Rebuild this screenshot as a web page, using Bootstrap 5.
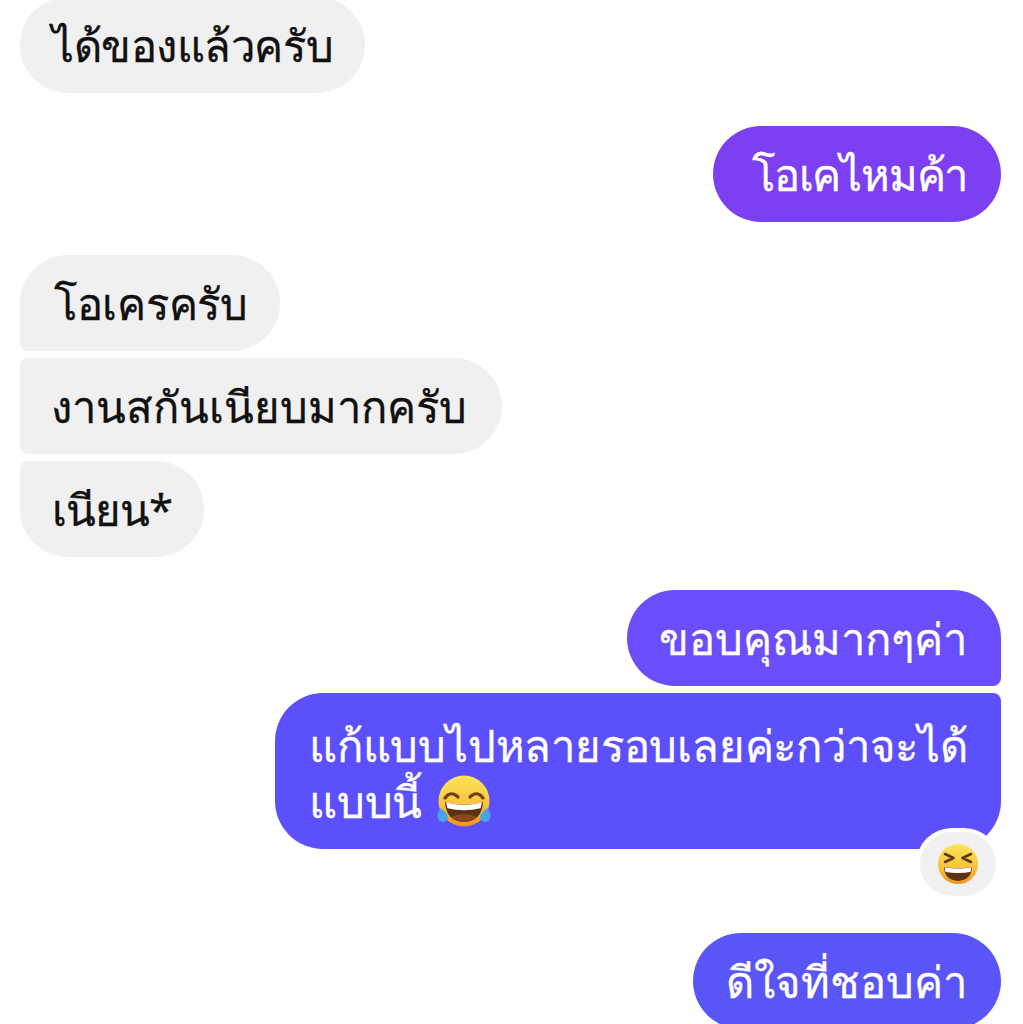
<!DOCTYPE html>
<html lang="th">
<head>
  <meta charset="UTF-8">
  <meta name="viewport" content="width=device-width, initial-scale=1.0">
  <title>Chat</title>
  <link href="https://cdn.jsdelivr.net/npm/bootstrap@5.3.0/dist/css/bootstrap.min.css" rel="stylesheet">
  <style>
    html, body { height: 1024px; overflow: hidden; background: #fff; }
    body { font-family: "Noto Sans", "Liberation Sans", "DejaVu Sans", sans-serif; }
    .chat-wrap { margin-top: -3px; padding: 0 22px 0 20px; }
    .bubble { height: 96px; font-size: 43.6px; line-height: 52px; padding: 22px 34px; border-radius: 48px; white-space: nowrap; -webkit-text-stroke: 0.3px currentColor; }
    .them { background: #f0f0f0; color: #111; }
    .me { color: #fff; }
    .group-gap { margin-top: 33px; }
    .after-react { margin-top: 84px; }
    .stack { gap: 7px; }
    .c-purple { background: #7c3ff2; }
    .c-indigo { background: #6a4dfb; }
    .c-blue { background: #5b50fb; }
    .c-last { background: #5a55f6; }
    .them.top { border-bottom-left-radius: 8px; }
    .them.mid { border-top-left-radius: 8px; border-bottom-left-radius: 8px; }
    .them.end { border-top-left-radius: 8px; }
    .me.top { border-bottom-right-radius: 8px; }
    .me.end { border-top-right-radius: 8px; }
    .msg-got { width: 345px; padding-left: 32px; letter-spacing: -0.45px; }
    .msg-ok { width: 288px; letter-spacing: -1.2px; padding-left: 39px; }
    .msg-okay { width: 260px; letter-spacing: -0.3px; }
    .msg-neat { width: 482px; padding-left: 31px; }
    .msg-typo { width: 184px; letter-spacing: -1px; padding-left: 32px; }
    .msg-thanks { width: 374px; padding-left: 32px; }
    .msg-glad { width: 308px; padding-left: 33px; }
    .bubble.tall { height: 156px; width: 726px; padding: 24px 34px; line-height: 56px; letter-spacing: -0.2px; }
    .tear-emoji { vertical-align: -12px; margin-left: 3px; }
    .react { position: absolute; right: 5px; bottom: -47px; width: 76px; height: 64px; border-radius: 32px; background: #f1f1f1; box-shadow: 0 0 0 4px #fff; }
  </style>
</head>
<body>
  <div class="chat-wrap d-flex flex-column">
    <div class="d-flex"><div class="bubble them msg-got">ได้ของแล้วครับ</div></div>

    <div class="d-flex justify-content-end group-gap"><div class="bubble me c-purple msg-ok">โอเคไหมค้า</div></div>

    <div class="d-flex flex-column align-items-start stack group-gap">
      <div class="bubble them top msg-okay">โอเครครับ</div>
      <div class="bubble them mid msg-neat">งานสกันเนียบมากครับ</div>
      <div class="bubble them end msg-typo">เนียน*</div>
    </div>

    <div class="d-flex flex-column align-items-end stack group-gap">
      <div class="bubble me top c-indigo msg-thanks">ขอบคุณมากๆค่า</div>
      <div class="bubble me end tall c-blue position-relative">
        แก้แบบไปหลายรอบเลยค่ะกว่าจะได้<br>แบบนี้
        <svg width="56" height="56" viewBox="0 0 56 56" class="tear-emoji">
          <defs><linearGradient id="f1" x1="0" y1="0" x2="0" y2="1"><stop offset="0" stop-color="#fde45c"/><stop offset="0.6" stop-color="#f9c23a"/><stop offset="1" stop-color="#ef931c"/></linearGradient></defs>
          <circle cx="28" cy="27" r="25.500" fill="url(#f1)"/>
          <path d="M9 24q6-8 13-1M34 23q7-7 13 1" fill="none" stroke="#6b4316" stroke-width="3.200" stroke-linecap="round"/>
          <path d="M9 28q19 6 38 0q-1 19-19 20q-18-1-19-20z" fill="#5c3014"/>
          <path d="M10 28.300q18 5.700 36 0l-1.500 6q-16.500 4-33 0z" fill="#fff"/>
          <path d="M15 43q13-6 26 0q-6 5-13 5t-13-5z" fill="#8a4a1c"/>
          <path d="M5 34q-4 5-3.500 9q1 5 5.500 5q5-1 5-5q0-3-7-9z" fill="#4aa3e6"/>
          <path d="M51 34q4 5 3.500 9q-1 5-5.500 5q-5-1-5-5q0-3 7-9z" fill="#4aa3e6"/>
        </svg>
        <div class="react d-flex align-items-center justify-content-center">
          <svg width="44" height="44" viewBox="0 0 44 44">
            <defs><linearGradient id="f2" x1="0" y1="0" x2="0" y2="1"><stop offset="0" stop-color="#fde45c"/><stop offset="0.6" stop-color="#f9c23a"/><stop offset="1" stop-color="#ef931c"/></linearGradient></defs>
            <circle cx="22" cy="22" r="20" fill="url(#f2)"/>
            <path d="M9 12l8.500 4-8.500 4M35 12l-8.500 4 8.500 4" fill="none" stroke="#5a3a12" stroke-width="2.600" stroke-linecap="round" stroke-linejoin="round"/>
            <path d="M8 25q14 2.500 28 0q-.5 13-14 14q-13.500-1-14-14z" fill="#5c3014"/>
            <path d="M8.500 25.200q13.500 2.400 27 0l-1 4.800q-12.500 2-25 0z" fill="#fff"/>
          </svg>
        </div>
      </div>
    </div>

    <div class="d-flex justify-content-end after-react"><div class="bubble me c-last msg-glad">ดีใจที่ชอบค่า</div></div>
  </div>
</body>
</html>
